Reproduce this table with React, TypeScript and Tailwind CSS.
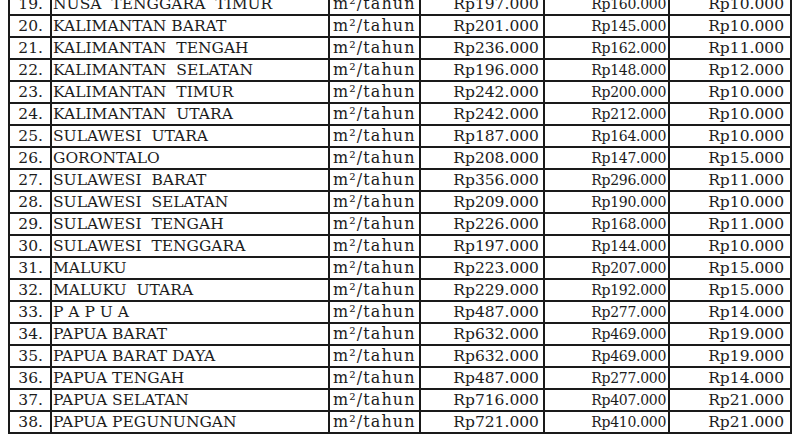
import React from 'react';

type Row = [string, string, string, string, string];

const rows: Row[] = [
    ['19.', 'NUSA  TENGGARA  TIMUR', 'Rp197.000', 'Rp160.000', 'Rp10.000'],
    ['20.', 'KALIMANTAN BARAT', 'Rp201.000', 'Rp145.000', 'Rp10.000'],
    ['21.', 'KALIMANTAN  TENGAH', 'Rp236.000', 'Rp162.000', 'Rp11.000'],
    ['22.', 'KALIMANTAN  SELATAN', 'Rp196.000', 'Rp148.000', 'Rp12.000'],
    ['23.', 'KALIMANTAN  TIMUR', 'Rp242.000', 'Rp200.000', 'Rp10.000'],
    ['24.', 'KALIMANTAN  UTARA', 'Rp242.000', 'Rp212.000', 'Rp10.000'],
    ['25.', 'SULAWESI  UTARA', 'Rp187.000', 'Rp164.000', 'Rp10.000'],
    ['26.', 'GORONTALO', 'Rp208.000', 'Rp147.000', 'Rp15.000'],
    ['27.', 'SULAWESI  BARAT', 'Rp356.000', 'Rp296.000', 'Rp11.000'],
    ['28.', 'SULAWESI  SELATAN', 'Rp209.000', 'Rp190.000', 'Rp10.000'],
    ['29.', 'SULAWESI  TENGAH', 'Rp226.000', 'Rp168.000', 'Rp11.000'],
    ['30.', 'SULAWESI  TENGGARA', 'Rp197.000', 'Rp144.000', 'Rp10.000'],
    ['31.', 'MALUKU', 'Rp223.000', 'Rp207.000', 'Rp15.000'],
    ['32.', 'MALUKU  UTARA', 'Rp229.000', 'Rp192.000', 'Rp15.000'],
    ['33.', 'P A P U A', 'Rp487.000', 'Rp277.000', 'Rp14.000'],
    ['34.', 'PAPUA BARAT', 'Rp632.000', 'Rp469.000', 'Rp19.000'],
    ['35.', 'PAPUA BARAT DAYA', 'Rp632.000', 'Rp469.000', 'Rp19.000'],
    ['36.', 'PAPUA TENGAH', 'Rp487.000', 'Rp277.000', 'Rp14.000'],
    ['37.', 'PAPUA SELATAN', 'Rp716.000', 'Rp407.000', 'Rp21.000'],
    ['38.', 'PAPUA PEGUNUNGAN', 'Rp721.000', 'Rp410.000', 'Rp21.000'],
];

const cell = 'border-2 border-[#1a1a1a] h-[22px] p-0 leading-none align-bottom pb-[2px]';

export default function App() {
    return (
        <div className="w-[800px] h-[443px] overflow-hidden bg-white">
            <table
                className="table-fixed border-collapse ml-[8px] mt-[-8px] text-[#1c1c1c] text-[15.5px]"
                style={{ fontFamily: '"DejaVu Serif", "Liberation Serif", serif' }}
            >
                <colgroup>
                    <col className="w-[42px]" />
                    <col className="w-[278px]" />
                    <col className="w-[91px]" />
                    <col className="w-[124px]" />
                    <col className="w-[125px]" />
                    <col className="w-[122px]" />
                </colgroup>
                <tbody>
                    {rows.map(([no, name, a, b, c]) => (
                        <tr key={no}>
                            <td className={`${cell} text-right pr-[7px]`}>{no}</td>
                            <td className={`${cell} pl-[1px] whitespace-pre`}>{name}</td>
                            <td className={`${cell} pl-[3px] text-[16px] tracking-[1.1px] whitespace-nowrap`}>m²/tahun</td>
                            <td className={`${cell} text-right pr-[4px]`}>{a}</td>
                            <td className={`${cell} text-right pr-[2px] text-[14px] tracking-[-0.3px] pb-[3px]`}>{b}</td>
                            <td className={`${cell} text-right pr-[6px]`}>{c}</td>
                        </tr>
                    ))}
                </tbody>
            </table>
        </div>
    );
}
